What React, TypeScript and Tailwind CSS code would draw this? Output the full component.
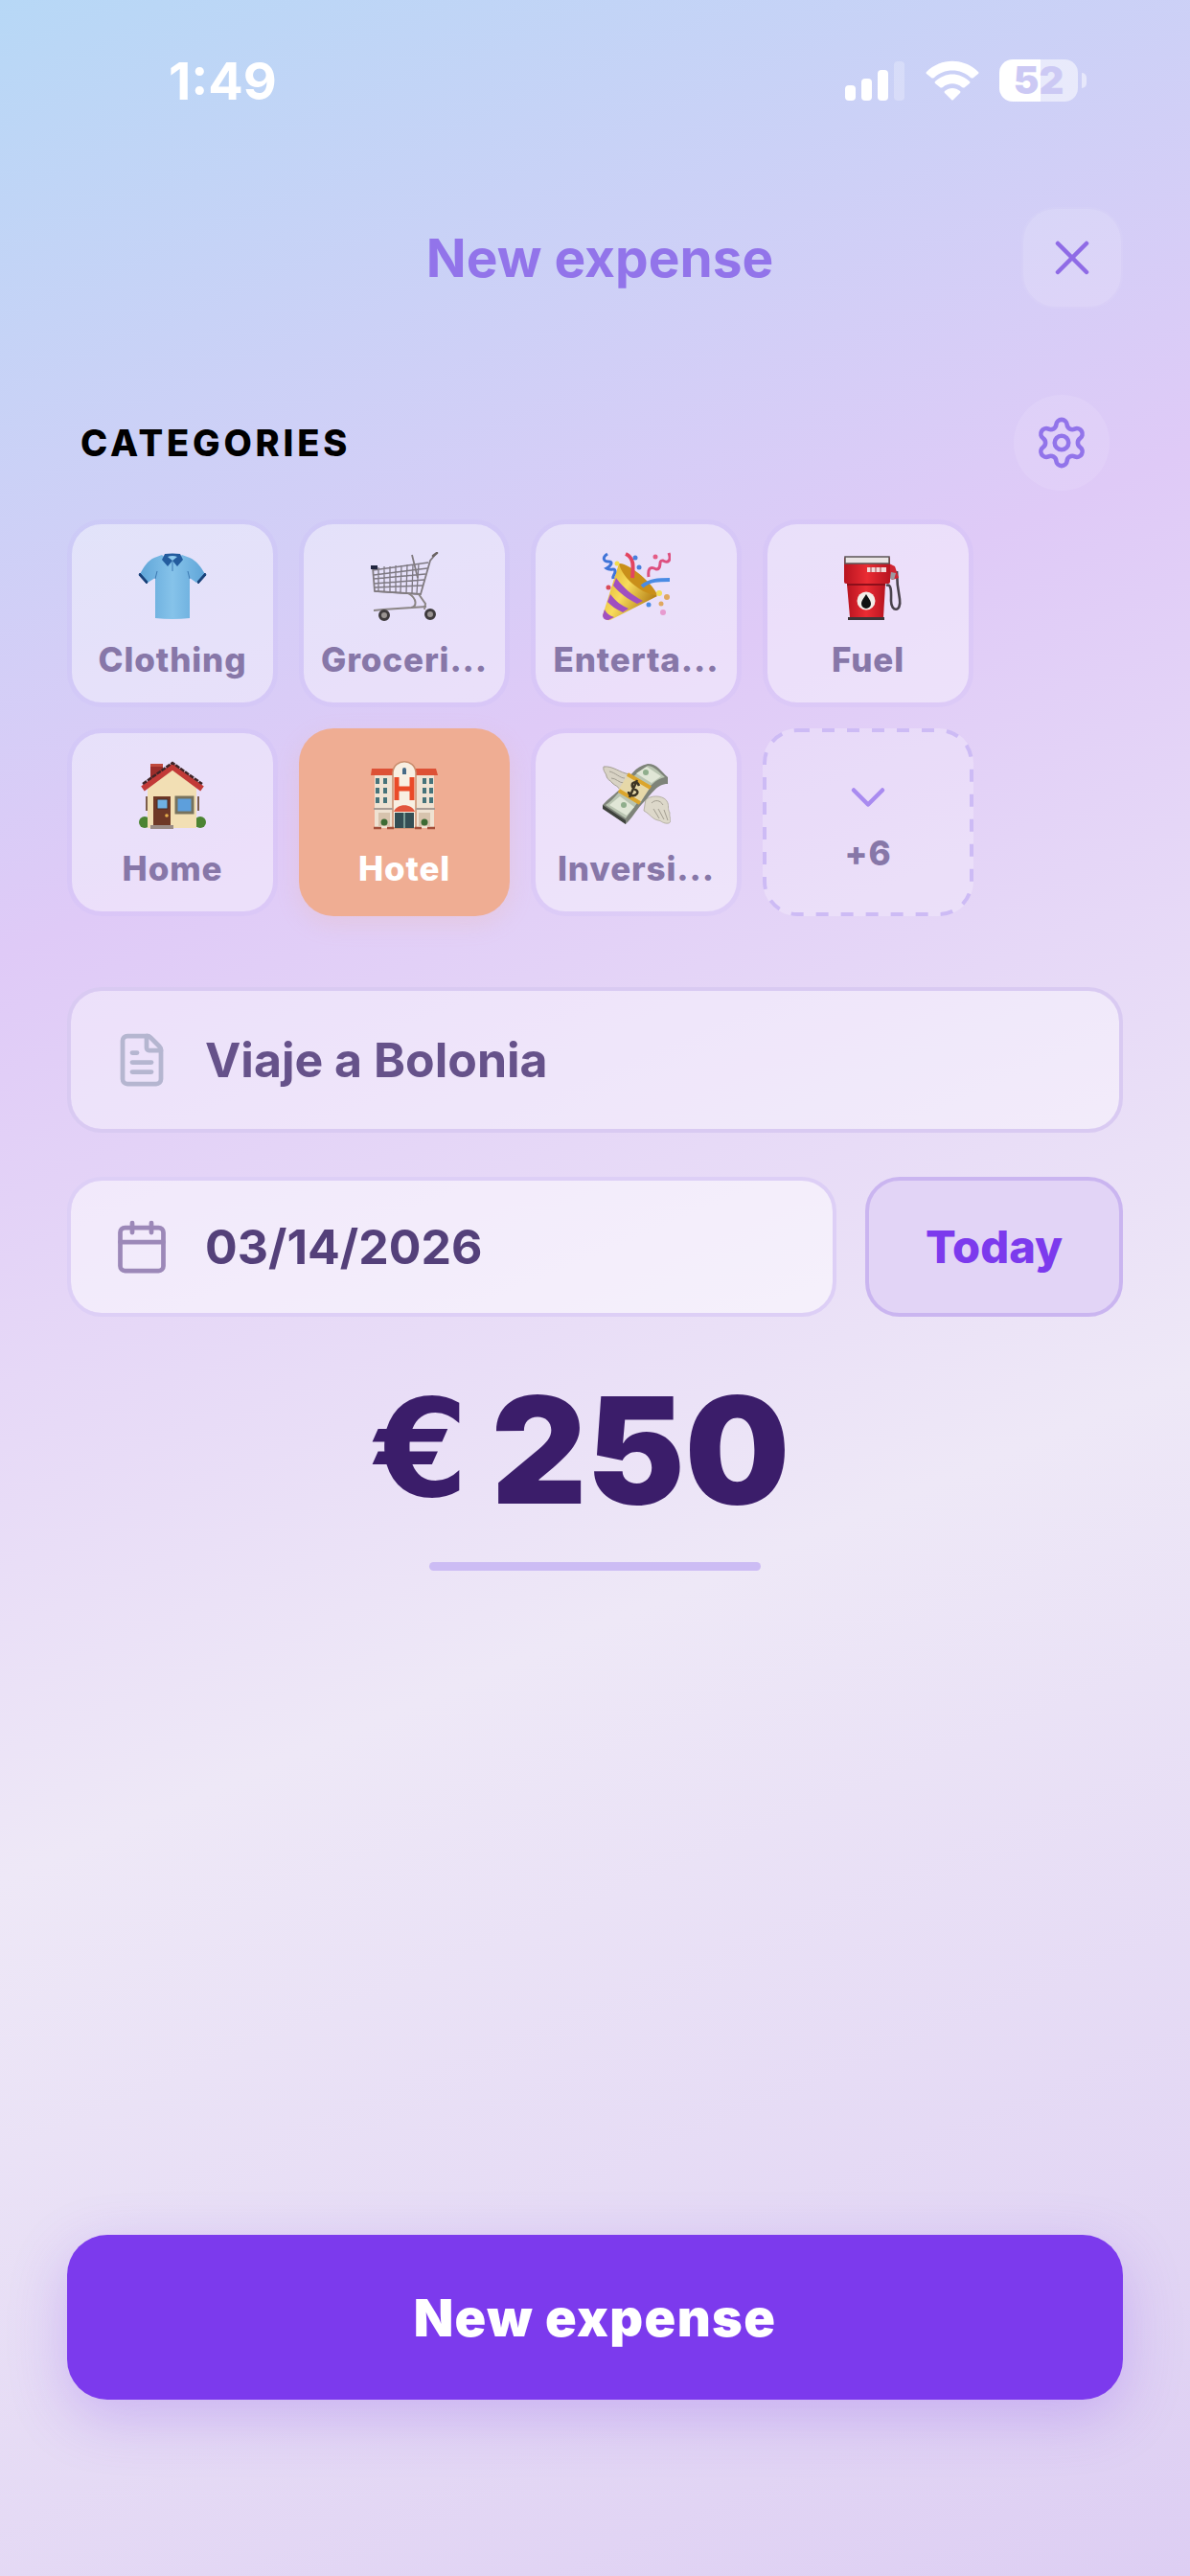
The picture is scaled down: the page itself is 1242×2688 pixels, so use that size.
import type { ReactNode } from "react";
import { Calendar, ChevronDown, FileText, Settings, X } from "lucide-react";

const ShirtIcon = () => (
  <svg viewBox="0 0 72 72" className="size-18" aria-hidden="true">
    <defs>
      <linearGradient id="shirt" x1="0" x2="1">
        <stop offset="0" stopColor="#5fa5d8" />
        <stop offset="0.5" stopColor="#86c3ea" />
        <stop offset="1" stopColor="#5fa5d8" />
      </linearGradient>
    </defs>
    <path
      d="M25 3 C30 8 41 8 46 3 L54 6 C61 9 66 16 70 23 L61 32 L54 27 L54 69 Q36 71 18 69 L18 27 L10 32 L2 23 C6 16 10 9 17 6 Z"
      fill="url(#shirt)"
    />
    <path d="M2 22 L10 31 L9 33 L1 24 Z M70 22 L62 31 L63 33 L71 24 Z" fill="#163f78" stroke="#163f78" />
    <path d="M28 2 Q36 1 44 2 L47 8 L41 15 L36 9 L31 15 L25 8 Z" fill="#245c9e" />
    <path d="M31 5 Q36 3 41 5 L36 9 Z" fill="#8ecbef" />
    <path d="M36 9 V20 M18 28 L20 20 M54 28 L52 20" stroke="#3c79b3" fill="none" />
  </svg>
);

const CartIcon = () => (
  <svg viewBox="0 0 72 72" className="size-18" fill="none" aria-hidden="true">
    <path
      d="M3 19 L61 11 M4 24 L60 17 M4 28 L58 23 M4 33 L57 29 M5 37 L55 35 M5 41 L53 44 M9 16 V41 M15 15 V41 M21 15 V42 M27 14 V42 M33 14 L32 42 M39 13 L38 43 M45 13 L44 43 M51 12 L49 43"
      stroke="#7d7882"
      strokeWidth="1.3"
    />
    <path d="M3 16 L5 41 L53 44 L63 9 L69 2 M44 3 L50 27" stroke="#817b80" strokeWidth="1.8" />
    <path d="M40 43 C50 49 49 57 43 58 M51 44 L58 54 L57 60 M4 61 L14 60 L59 57" stroke="#8b8585" strokeWidth="2" />
    <path d="M1 14 H8 V18 H1 Z" fill="#20253f" />
    <path d="M66 4 L70 1" stroke="#6b6464" strokeWidth="2.5" strokeLinecap="round" />
    <circle cx="15" cy="66" r="4.5" fill="#9a9492" stroke="#3f3b3d" strokeWidth="3" />
    <circle cx="63" cy="65" r="4.5" fill="#9a9492" stroke="#3f3b3d" strokeWidth="3" />
  </svg>
);

const PartyIcon = () => (
  <svg viewBox="0 0 72 72" className="size-18" fill="none" aria-hidden="true">
    <defs>
      <linearGradient id="cone" x1="0" y1="0" x2="1" y2="0.6">
        <stop offset="0" stopColor="#d9a520" />
        <stop offset="0.5" stopColor="#f8dc5c" />
        <stop offset="1" stopColor="#b07a12" />
      </linearGradient>
    </defs>
    <path d="M18 12 L1 66 Q2 72 9 71 L58 46 Z" fill="url(#cone)" />
    <path d="M18 12 C27 10 55 34 58 45 C47 46 22 30 18 12 Z" fill="#c98f1a" />
    <path d="M15 27 C23 38 32 45 43 51 L37 54 C27 49 19 43 12 35 Z" fill="#a04fc0" />
    <path d="M9 44 C15 52 21 56 28 59 L22 63 C15 60 10 56 6 52 Z" fill="#a04fc0" />
    <path d="M3 60 Q6 66 13 68 L7 71 Q1 71 1 66 Z" fill="#a04fc0" />
    <path d="M6 2 C0 6 2 10 7 10 C13 10 9 15 5 17 C9 20 14 16 14 20 C14 24 11 24 12 28" stroke="#3f74d8" strokeWidth="3" />
    <path d="M25 2 C34 6 33 15 32 27" stroke="#e34460" strokeWidth="4" />
    <path d="M70 1 C73 9 69 12 64 9 C58 8 64 18 57 18 C50 14 48 18 49 26" stroke="#dd4f7f" strokeWidth="3" />
    <path d="M42 36 C50 29 60 29 71 29" stroke="#4a8be4" strokeWidth="4" />
    <circle cx="35" cy="6" r="2.5" fill="#4a7fdc" />
    <circle cx="39" cy="16" r="2.5" fill="#4a7fdc" />
    <circle cx="56" cy="5" r="2.5" fill="#e45c86" />
    <circle cx="16" cy="12" r="2.5" fill="#f3dc4d" />
    <circle cx="7" cy="37" r="2.5" fill="#d94a58" />
    <circle cx="60" cy="43" r="3" fill="#f1df5a" />
    <circle cx="68" cy="47" r="3" fill="#e0a860" />
    <circle cx="49" cy="55" r="2.5" fill="#4a8be4" />
    <circle cx="62" cy="54" r="2.5" fill="#e0a860" />
    <circle cx="64" cy="63" r="3" fill="#e79bd0" />
  </svg>
);

const FuelIcon = () => (
  <svg viewBox="0 0 72 72" className="size-18" fill="none" aria-hidden="true">
    <defs>
      <linearGradient id="pump" x1="0" x2="1">
        <stop offset="0" stopColor="#b81420" />
        <stop offset="0.5" stopColor="#ea2c33" />
        <stop offset="1" stopColor="#b81420" />
      </linearGradient>
    </defs>
    <path d="M55 35 C61 32 60 44 60 51 C60 63 71 63 69 49 C67 39 66 30 66 20" stroke="#4a434d" strokeWidth="2.6" />
    <path d="M58 12 L64 15 L68 27 L61 29 L58 26 Z" fill="#cf2633" />
    <path d="M60 21 L65 22 L63 29 L59 28 Z" fill="#9b9aa1" />
    <path d="M14 34 H54 L52 68 H17 Z" fill="url(#pump)" />
    <path d="M14 34 H54" stroke="#8d0f1a" strokeWidth="2" />
    <rect x="11" y="5" width="48" height="28" rx="2" fill="url(#pump)" />
    <path d="M12 5 H58 V12 H12 Z" fill="#e9e4e4" stroke="#5c5557" strokeWidth="1.5" />
    <path d="M35 16 H55 V21 H35 Z" fill="#f3d9d8" />
    <path d="M39 16 V21 M44 16 V21 M49 16 V21" stroke="#a33c42" />
    <path d="M15 68 H53 V71 H15 Z" fill="#3b3437" />
    <circle cx="34" cy="51" r="9.5" fill="#f3eee8" />
    <path d="M34 44 C37 49 39 51 39 54 A5 5 0 0 1 29 54 C29 51 31 49 34 44 Z" fill="#101010" />
  </svg>
);

const HomeIcon = () => (
  <svg viewBox="0 0 72 72" className="size-18" fill="none" aria-hidden="true">
    <path d="M13 3 H26 V18 L13 26 Z" fill="#9c2e2b" />
    <path d="M13 3 H26 V6 H13 Z" fill="#c04a3e" />
    <circle cx="7" cy="64" r="6" fill="#4c8433" />
    <circle cx="65" cy="64" r="6" fill="#4c8433" />
    <path d="M10 28 L36 8 L61 28 V70 H10 Z" fill="#f2dfb4" />
    <path d="M9 37 V52 M63 37 V52" stroke="#7c5e4c" strokeWidth="2" />
    <path d="M5 29 L36 6 L67 29" stroke="#c23a37" strokeWidth="6" />
    <path d="M5 24 L36 2 L67 24" stroke="#3f2427" strokeWidth="2.5" strokeDasharray="5 1" />
    <path d="M16 37 H34 V67 H16 Z" fill="#6e3826" />
    <path d="M20 40 H31 V50 H20 Z" fill="#6fb1e2" stroke="#4b2a20" />
    <circle cx="30" cy="57" r="1.8" fill="#e7b04c" />
    <path d="M40 38 H57 V54 H40 Z" fill="#5d9fdc" stroke="#77725d" strokeWidth="3" />
    <path d="M13 67 H37 V71 H13 Z" fill="#9a8b85" />
  </svg>
);

const HotelIcon = () => (
  <svg viewBox="0 0 72 72" className="size-18" fill="none" aria-hidden="true">
    <path d="M5 14 H67 V70 H5 Z" fill="#efe2d2" />
    <path d="M2 8 H26 V15 H1 Z M46 8 H69 L71 15 H46 Z" fill="#dd5136" />
    <path d="M24 70 V12 C25 -3 47 -3 48 12 V70 Z" fill="#f8efe2" stroke="#c98d6d" strokeWidth="1.5" />
    <path d="M34 14 V9 A2 2 0 0 1 38 9 V14 Z" fill="#466b88" />
    <path
      d="M6 18 H10 V24 H6 Z M14 18 H18 V24 H14 Z M6 28 H10 V34 H6 Z M14 28 H18 V34 H14 Z M6 38 H10 V44 H6 Z M14 38 H18 V44 H14 Z M55 18 H59 V24 H55 Z M62 18 H66 V24 H62 Z M55 28 H59 V34 H55 Z M62 28 H66 V34 H62 Z M55 38 H59 V44 H55 Z M62 38 H66 V44 H62 Z"
      fill="#46737a"
    />
    <path d="M28 17 V41 M44 17 V41 M28 29 H44" stroke="#ea4a28" strokeWidth="5" />
    <path d="M4 50 H24 M48 50 H68" stroke="#a99d95" strokeWidth="2" />
    <path d="M9 54 H21 V68 H9 Z M51 54 H63 V68 H51 Z" fill="#d7c3ad" />
    <path d="M26 54 H46 V70 H26 Z" fill="#344e54" />
    <path d="M36 54 V70" stroke="#93b9ae" strokeWidth="1.5" />
    <path d="M25 53 C28 44 44 44 47 53 Z" fill="#e2553c" />
    <circle cx="15" cy="64" r="3.5" fill="#3d6b34" />
    <circle cx="57" cy="64" r="3.5" fill="#3d6b34" />
    <path d="M4 70 H12 M18 70 H25 M47 70 H54 M60 70 H68" stroke="#a34f3a" strokeWidth="2.5" />
  </svg>
);

const MoneyIcon = () => (
  <svg viewBox="0 0 72 72" className="size-18" fill="none" aria-hidden="true">
    <path
      d="M29 14 C18 12 12 5 2 6 C1 11 5 13 5 16 C6 20 9 20 11 23 C14 26 17 26 19 30 L26 30 Z"
      fill="#d8d2c4"
      stroke="#a39e92"
    />
    <path d="M8 11 C14 12 19 18 24 18 M10 18 C15 18 18 23 23 23" stroke="#a39e92" />
    <path
      d="M46 40 C56 34 66 38 68 42 C71 47 68 49 71 54 C70 59 74 63 70 65 C64 66 62 62 59 62 C53 61 50 55 44 52 Z"
      fill="#ddd8ca"
      stroke="#b7b2a6"
    />
    <path d="M52 44 C56 40 61 41 64 46 M54 50 L60 60 M59 50 L65 61 M65 51 L69 62" stroke="#a39e92" />
    <path d="M1 46 C8 38 14 35 19 29 C30 16 34 6 48 3 C58 3 62 11 69 17 L69 24 C57 24 53 34 42 45 C35 53 33 58 25 66 L1 49 Z" fill="#7e8379" />
    <path d="M4 46 C16 39 26 18 48 5 C56 6 60 12 66 17 C51 20 44 36 25 60 Z" fill="#b9c4b1" />
    <path d="M36 13 L47 6 L62 16 L52 23 Z M8 46 L19 37 L34 48 L26 57 Z" fill="#e0e6d6" />
    <circle cx="46" cy="12" r="3" fill="#8fae8c" />
    <circle cx="23" cy="46" r="3" fill="#8fae8c" />
    <path d="M28 13 L51 27 L40 44 L17 31 Z" fill="#e6d8a8" />
    <path d="M27 14 L51 28 M18 31 L40 44" stroke="#dba52c" strokeWidth="4" />
    <path d="M1 46 L25 62 V66 L1 50 Z" fill="#3f423d" />
    <path d="M39 26 C37 20 30 22 32 27 C34 31 39 30 37 34 C34 38 28 36 28 32 M37 20 L29 38" stroke="#3d3524" strokeWidth="2.5" />
  </svg>
);

type Category = { name: string; icon: ReactNode; selected?: boolean };

const categories: Category[] = [
  { name: "Clothing", icon: <ShirtIcon /> },
  { name: "Groceri...", icon: <CartIcon /> },
  { name: "Enterta...", icon: <PartyIcon /> },
  { name: "Fuel", icon: <FuelIcon /> },
  { name: "Home", icon: <HomeIcon /> },
  { name: "Hotel", icon: <HotelIcon />, selected: true },
  { name: "Inversi...", icon: <MoneyIcon /> },
];

const StatusBar = () => (
  <div className="flex h-42 items-center justify-between pr-27 pl-44 text-white">
    <span className="text-[54px] font-bold">1:49</span>
    <div className="flex items-center gap-5">
      <svg viewBox="0 0 63 41" className="h-[41px] w-[63px]" fill="currentColor" aria-hidden="true">
        <rect x="0" y="25" width="11" height="16" rx="4" />
        <rect x="17" y="18" width="11" height="23" rx="4" />
        <rect x="34" y="9" width="11" height="32" rx="4" />
        <rect x="51" y="0" width="11" height="41" rx="4" opacity="0.25" />
      </svg>
      <svg viewBox="0 0 58 42" className="h-[42px] w-[58px]" fill="currentColor" aria-hidden="true">
        <path d="M2 12 C17 -3 41 -3 56 12 Q57 13 56 14 L51 18 Q50 19 48 18 C38 8 20 8 10 18 Q8 19 7 18 L2 14 Q1 13 2 12 Z" />
        <path d="M11 22 C22 12 36 12 47 22 Q48 23 47 24 L42 28 Q41 29 39 28 C33 23 25 23 19 28 Q17 29 16 28 L11 24 Q10 23 11 22 Z" />
        <path d="M21 32 C26 28 32 28 37 32 Q38 33 37 34 L30 41 Q29 42 28 41 L21 34 Q20 33 21 32 Z" />
      </svg>
      <div className="flex items-center gap-1">
        <div className="flex h-11 w-[82px] items-center justify-center rounded-[14px] bg-linear-to-r from-white from-52% to-white/55 to-52% text-[40px] leading-11 font-black text-[#ccc9f4]">
          52
        </div>
        <span className="h-4 w-[5px] rounded-r-full bg-white/50" />
      </div>
    </div>
  </div>
);

const Tile = ({ name, icon, selected }: Category) => (
  <button
    type="button"
    aria-pressed={!!selected}
    className={
      selected
        ? "flex h-49 flex-col items-center justify-center gap-4 rounded-[36px] bg-[#efad93] pt-2 text-[35px] leading-12 font-extrabold tracking-wide text-white shadow-[0_8px_24px_rgba(239,173,147,0.2)]"
        : "flex h-49 flex-col items-center justify-center gap-4 rounded-[36px] border-[5px] border-[#c8b8f8]/20 bg-white/40 bg-clip-padding pt-2 text-[35px] leading-12 font-extrabold tracking-wide text-[#8777a8]"
    }
  >
    {icon}
    {name}
  </button>
);

export default function App() {
  return (
    <div className="flex min-h-screen flex-col bg-[linear-gradient(157deg,#b7d8f6_0%,#dfcaf7_31%,#eee8f7_61%,#ddcef3_100%)] font-['Inter',sans-serif]">
      <StatusBar />

      <main className="flex flex-1 flex-col px-[70px] pb-46">
        <header className="mt-12 grid grid-cols-[116px_1fr_106px] items-center">
          <h1 className="col-start-2 text-center text-[55px] font-bold text-[#9274ea]">New expense</h1>
          <button
            type="button"
            aria-label="Close"
            className="flex size-[106px] items-center justify-center rounded-[36px] border-2 border-white/5 bg-white/15 bg-clip-padding text-[#8f6be6]"
          >
            <X size={60} strokeWidth={1.8} />
          </button>
        </header>

        <section className="mt-[90px]">
          <div className="flex items-center justify-between pr-[14px] pl-[14px]">
            <h2 className="text-[38px] font-extrabold tracking-widest text-black uppercase">Categories</h2>
            <button
              type="button"
              aria-label="Category settings"
              className="flex size-25 items-center justify-center rounded-full bg-white/10 text-[#9274ea]"
            >
              <Settings size={58} strokeWidth={1.9} />
            </button>
          </div>

          <div className="mt-[30px] grid grid-cols-[repeat(4,220px)] gap-[22px]">
            {categories.map((category) => (
              <Tile key={category.name} {...category} />
            ))}
            <button
              type="button"
              className="relative flex h-49 flex-col items-center justify-center gap-1 rounded-[36px] bg-white/25 text-[35px] leading-12 font-extrabold tracking-wide text-[#8777a8]"
            >
              <svg viewBox="0 0 220 196" className="absolute inset-0 size-full" fill="none" aria-hidden="true">
                <rect x="2" y="2" width="216" height="192" rx="34" stroke="#cdbbf5" strokeWidth="4" strokeDasharray="13 13" />
              </svg>
              <ChevronDown size={60} strokeWidth={1.8} className="text-[#a98bf0]" />
              +6
            </button>
          </div>
        </section>

        <form className="mt-[74px] flex flex-1 flex-col">
          <label className="flex h-38 items-center gap-9 rounded-[36px] border-4 border-[#d9caf2] bg-white/40 bg-clip-padding px-11">
            <FileText size={60} strokeWidth={1.9} className="shrink-0 text-[#b5b6d0]" />
            <input
              aria-label="Description"
              defaultValue="Viaje a Bolonia"
              className="w-full min-w-0 bg-transparent text-[50px] font-bold text-[#66528a] outline-none"
            />
          </label>

          <div className="mt-[46px] flex h-[146px] gap-[30px]">
            <label className="flex flex-1 items-center gap-9 rounded-[36px] border-4 border-[#ddcff6] bg-white/50 bg-clip-padding px-11">
              {/* plain month grid, header rule and two rings */}
              <Calendar size={60} strokeWidth={1.9} className="shrink-0 text-[#9c88b8]" />
              <input
                aria-label="Date"
                defaultValue="03/14/2026"
                className="w-full min-w-0 bg-transparent text-[50px] font-bold text-[#54407a] outline-none"
              />
            </label>
            <button
              type="button"
              className="w-[269px] rounded-[36px] border-4 border-[#cab5f0] bg-[#e2d4f6] text-[47px] font-extrabold text-[#7c3aed]"
            >
              Today
            </button>
          </div>

          <label className="mt-[46px] flex items-center justify-center gap-6 leading-none font-black text-[#3b1d6a]">
            <span className="font-['DejaVu_Sans',sans-serif] text-[140px] font-bold">€</span>
            <input
              aria-label="Amount"
              inputMode="decimal"
              defaultValue="250"
              className="w-[338px] bg-transparent text-[154px] outline-none"
            />
          </label>
          <div className="mx-auto mt-6 h-[9px] w-[346px] rounded-full bg-[#ccbcf4]" />

          <button
            type="submit"
            className="mt-auto h-43 rounded-[42px] bg-[#7c3aed] text-[54px] font-black tracking-wide text-white shadow-[0_18px_60px_rgba(124,58,237,0.25)]"
          >
            New expense
          </button>
        </form>
      </main>
    </div>
  );
}
